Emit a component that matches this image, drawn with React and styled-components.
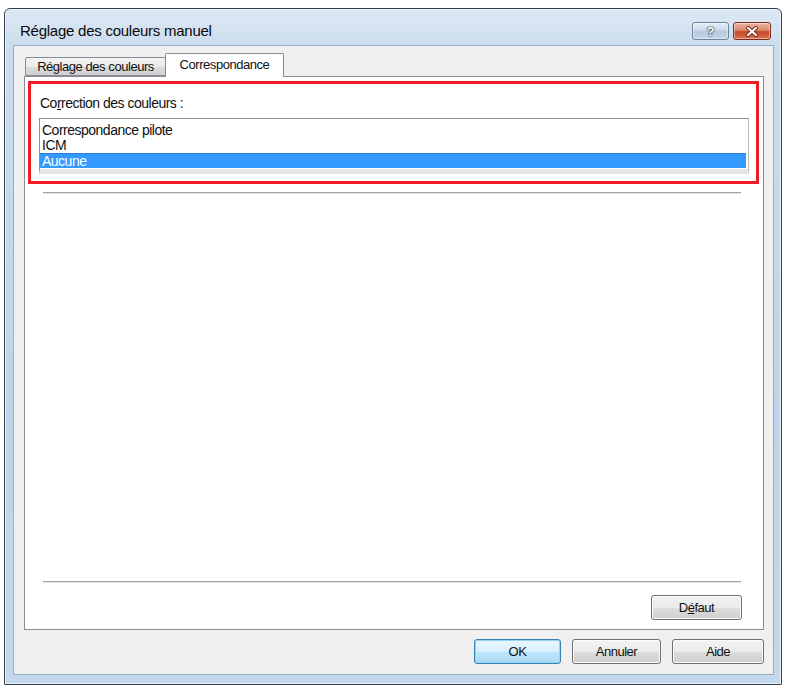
import styled, { createGlobalStyle } from "styled-components";

const GlobalStyles = createGlobalStyle`
  html, body {
    margin: 0;
    padding: 0;
    background: #ffffff;
    font-family: "Liberation Sans", Arial, sans-serif;
    color: #111;
  }
  * { box-sizing: border-box; }
`;

const Pagina = styled.div`
  width: 787px;
  height: 690px;
  padding: 8px 0 0 4px;
`;

const Ventana = styled.div`
  width: 778px;
  height: 677px;
  display: flex;
  flex-direction: column;
  padding: 0 7px 9px 8px;
  border: 1px solid #34404c;
  border-radius: 6px 6px 1px 1px;
  background: linear-gradient(180deg, #dde8f4 0%, #cbdcee 6%, #bfd4ea 60%, #c4d8ec 100%);
  box-shadow: inset 0 0 0 1px #e9f1f9;
`;

const BarraTitulo = styled.div`
  height: 36px;
  display: flex;
  align-items: flex-start;
  justify-content: space-between;
  padding: 13px 3px 0 7px;
`;

const Titulo = styled.span`
  font-size: 15px;
  letter-spacing: -0.25px;
  line-height: 18px;
  color: #0a0a0a;
`;

const BotonesTitulo = styled.div`
  display: flex;
  gap: 4px;
`;

const BotonTitulo = styled.div`
  width: ${(p) => (p.$cerrar ? "38px" : "37px")};
  height: 18px;
  border: 1px solid ${(p) => (p.$cerrar ? "#7b2a1d" : "#6f8296")};
  border-radius: 3px;
  display: flex;
  align-items: center;
  justify-content: center;
  background: ${(p) =>
    p.$cerrar
      ? "linear-gradient(180deg, #eab5a3 0%, #dc8a6f 45%, #c6462a 55%, #d9714f 100%)"
      : "linear-gradient(180deg, #e6eef7 0%, #cad9ea 45%, #b3c8de 55%, #c5d7ea 100%)"};
  box-shadow: inset 0 0 0 1px rgba(255, 255, 255, 0.45);
  font-size: 13px;
  font-weight: bold;
  color: #ffffff;
  text-shadow: 0 0 1px #2e3e50, 0 0 2px #2e3e50, 0 0 1px #2e3e50;
`;

const Cliente = styled.div`
  flex: 1;
  display: flex;
  flex-direction: column;
  background: #f0f0f0;
  border: 1px solid #98adc4;
  padding: 7px 9px 10px 10px;
`;

const FilaPestanas = styled.div`
  display: flex;
  align-items: flex-end;
  height: 23px;
  padding-left: 1px;
  position: relative;
  z-index: 1;
`;

const Pestana = styled.div`
  height: ${(p) => (p.$activa ? "24px" : "19px")};
  width: ${(p) => p.$ancho}px;
  margin-left: ${(p) => (p.$activa ? "-1px" : "0")};
  margin-bottom: ${(p) => (p.$activa ? "-1px" : "0")};
  border: 1px solid #898c95;
  border-bottom: ${(p) => (p.$activa ? "none" : "1px solid #898c95")};
  background: ${(p) =>
    p.$activa ? "#ffffff" : "linear-gradient(180deg, #f3f3f3 0%, #ebebeb 50%, #dddddd 51%, #cfcfcf 100%)"};
  border-radius: 2px 2px 0 0;
  font-size: 13px;
  letter-spacing: -0.45px;
  line-height: 15px;
  display: flex;
  align-items: flex-end;
  justify-content: center;
  padding-bottom: ${(p) => (p.$activa ? "5px" : "1px")};
`;

const Panel = styled.div`
  flex: 1;
  display: flex;
  flex-direction: column;
  background: #ffffff;
  border: 1px solid #898c95;
  padding: 4px 4px 9px 3px;
`;

const RecuadroRojo = styled.div`
  border: 3px solid #ee1c25;
  padding: 11px 7px 7px 8px;
`;

const Etiqueta = styled.div`
  font-size: 14px;
  letter-spacing: -0.5px;
  line-height: 16px;
  margin: 0 0 7px 1px;
`;

const Lista = styled.div`
  height: 56px;
  border: 1px solid #8e8f8f;
  border-right-color: #b9b9b9;
  background: #ffffff;
  padding-top: 4px;
  display: flex;
  flex-direction: column;
  border-bottom: 5px solid #e6e6e6;
`;

const Elemento = styled.div`
  height: 15px;
  line-height: 14px;
  font-size: 14px;
  letter-spacing: -0.5px;
  padding-left: 2px;
  margin-right: 2px;
  background: ${(p) => (p.$sel ? "#3399ff" : "transparent")};
  color: ${(p) => (p.$sel ? "#ffffff" : "#111")};
  border-top: ${(p) => (p.$sel ? "1px solid #2a7ed6" : "none")};
`;

const Separador = styled.div`
  margin: ${(p) => p.$margen};
  border-top: 1px solid #a6a6a6;
  border-bottom: 1px solid #e4e4e4;
`;

const Relleno = styled.div`
  flex: 1;
`;

const FilaBoton = styled.div`
  display: flex;
  justify-content: flex-end;
  padding-right: 17px;
  margin-top: 12px;
`;

const Boton = styled.button`
  width: ${(p) => p.$ancho}px;
  height: 25px;
  font-family: "Liberation Sans", Arial, sans-serif;
  font-size: 13px;
  letter-spacing: -0.5px;
  color: #111;
  border-radius: 3px;
  border: 1px solid ${(p) => (p.$defecto ? "#3c7fb1" : "#707070")};
  background: ${(p) =>
    p.$defecto
      ? "linear-gradient(180deg, #eaf6fd 0%, #d9f0fc 50%, #bee6fd 51%, #a7d9f5 100%)"
      : "linear-gradient(180deg, #f2f2f2 0%, #ebebeb 50%, #dddddd 51%, #cfcfcf 100%)"};
  box-shadow: inset 0 0 0 1px ${(p) => (p.$defecto ? "#94d5f7" : "#fbfbfb")};
  padding: 0;
`;

const PieBotones = styled.div`
  display: flex;
  justify-content: flex-end;
  gap: 11px;
  margin-top: 9px;
`;

const IconoCerrar = () => (
  <svg width="14" height="11" viewBox="0 0 14 11">
    <path d="M3 2 L11 9 M11 2 L3 9" stroke="#6a2315" strokeWidth="4" strokeLinecap="round" />
    <path d="M3 2 L11 9 M11 2 L3 9" stroke="#ffffff" strokeWidth="2.2" strokeLinecap="round" />
  </svg>
);

const App = () => {
  return (
    <>
      <GlobalStyles />
      <Pagina>
        <Ventana>
          <BarraTitulo>
            <Titulo>Réglage des couleurs manuel</Titulo>
            <BotonesTitulo>
              <BotonTitulo>?</BotonTitulo>
              <BotonTitulo $cerrar>
                <IconoCerrar />
              </BotonTitulo>
            </BotonesTitulo>
          </BarraTitulo>
          <Cliente>
            <FilaPestanas>
              <Pestana $ancho={141}>Réglage des couleurs</Pestana>
              <Pestana $activa $ancho={119}>Correspondance</Pestana>
            </FilaPestanas>
            <Panel>
              <RecuadroRojo>
                <Etiqueta>
                  Co<u>r</u>rection des couleurs :
                </Etiqueta>
                <Lista>
                  <Elemento>Correspondance pilote</Elemento>
                  <Elemento>ICM</Elemento>
                  <Elemento $sel>Aucune</Elemento>
                </Lista>
              </RecuadroRojo>
              <Separador $margen="8px 18px 0 15px" />
              <Relleno />
              <Separador $margen="0 18px 0 15px" />
              <FilaBoton>
                <Boton $ancho={91}>
                  D<u>é</u>faut
                </Boton>
              </FilaBoton>
            </Panel>
            <PieBotones>
              <Boton $defecto $ancho={87}>OK</Boton>
              <Boton $ancho={89}>Annuler</Boton>
              <Boton $ancho={92}>Aide</Boton>
            </PieBotones>
          </Cliente>
        </Ventana>
      </Pagina>
    </>
  );
};

export default App;
